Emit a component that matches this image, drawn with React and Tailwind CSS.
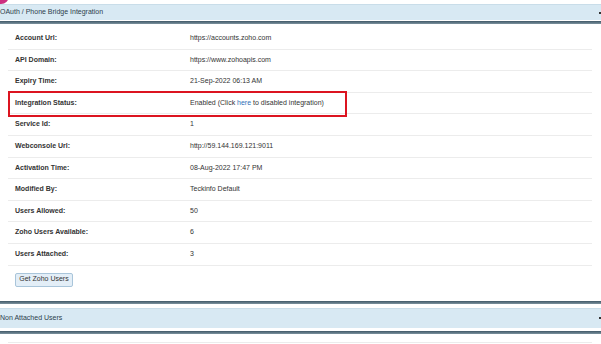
const rows = [
  ["Account Url:", "https://accounts.zoho.com"],
  ["API Domain:", "https://www.zohoapis.com"],
  ["Expiry Time:", "21-Sep-2022 06:13 AM"],
  ["Integration Status:", "status"],
  ["Service Id:", "1"],
  ["Webconsole Url:", "http://59.144.169.121:9011"],
  ["Activation Time:", "08-Aug-2022 17:47 PM"],
  ["Modified By:", "Teckinfo Default"],
  ["Users Allowed:", "50"],
  ["Zoho Users Available:", "6"],
  ["Users Attached:", "3"],
];

const SectionBar = ({ title, tall }) => (
  <div
    className={`flex items-center justify-between bg-[#d8e9f3] border-t border-[#c9dde9] ${
      tall ? "h-[20px]" : "h-[16px]"
    }`}
  >
    <span className="text-[7px] text-[#2c3e4c]">{title}</span>
    <span className="w-[2px] h-[2px] bg-[#333]" />
  </div>
);

const DarkLine = () => <div className="h-[3px] bg-gradient-to-b from-[#3f5867] to-[#7d939f]" />;

export default function App() {
  return (
    <div className="w-[601px] h-[344px] overflow-hidden bg-white font-['Liberation_Sans',Arial,sans-serif]">
      {/* page heading sits above the fold, only the logo edge peeks in */}
      <div className="h-[4px] overflow-hidden flex items-end">
        <div className="w-[16px] h-[16px] rounded-full bg-[#cc2f80] -ml-[7px] shrink-0" />
      </div>

      <SectionBar title="OAuth / Phone Bridge Integration" />
      <div className="h-[1px]" />
      <DarkLine />

      <div className="pt-[4px] ml-[8px] w-[584px]">
        {rows.map(([label, value]) => (
          <div
            key={label}
            className="relative flex items-center h-[21.6px] border-b border-[#ececec] text-[7px] text-[#333]"
          >
            <div className="w-[182px] pl-[7px] font-bold">{label}</div>
            <div>
              {value === "status" ? (
                <>
                  Enabled (Click <span className="text-[#2f6fb7]">here</span> to disabled integration)
                </>
              ) : (
                value
              )}
            </div>
            {value === "status" && (
              <div className="absolute left-0 top-[-1.5px] w-[339px] h-[25.5px] border-[2.5px] border-[#dc1420]" />
            )}
          </div>
        ))}
      </div>

      <div className="flex pt-[7px] pl-[15px]">
        <button className="h-[14px] w-[58px] rounded-[2px] border border-[#a9c5da] bg-[#e3eef7] text-[7px] text-[#333]">
          Get Zoho Users
        </button>
      </div>

      <div className="h-[14.4px]" />
      <DarkLine />
      <div className="h-[4px]" />
      <SectionBar title="Non Attached Users" tall />
      <div className="h-[3px]" />
      <DarkLine />
      <div className="ml-[8px] w-[584px] h-[9px] border-b border-[#ececec]" />
    </div>
  );
}
